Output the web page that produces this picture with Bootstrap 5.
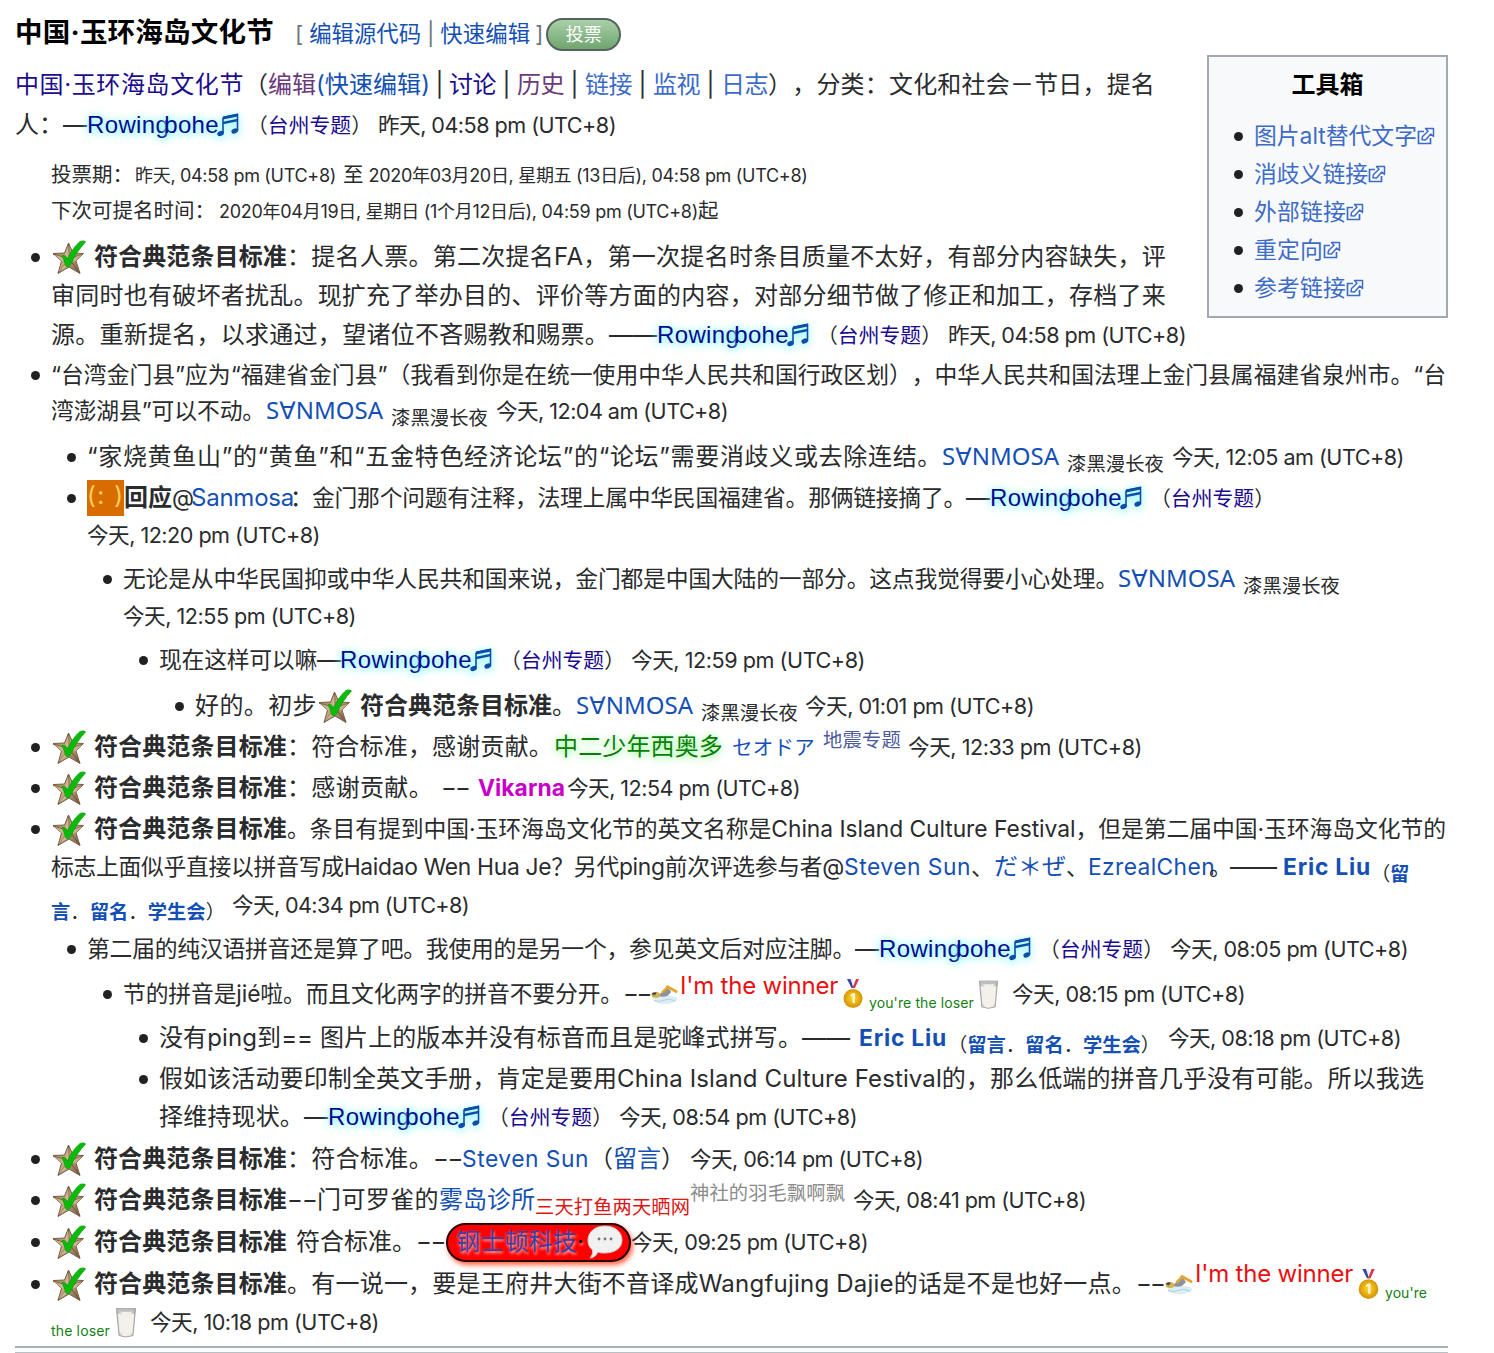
<!DOCTYPE html>
<html lang="zh-CN">
<head>
<meta charset="utf-8">
<title>中国·玉环海岛文化节</title>
<link href="https://cdn.jsdelivr.net/npm/bootstrap@5.3.0/dist/css/bootstrap.min.css" rel="stylesheet">
<script src="https://cdn.jsdelivr.net/npm/bootstrap@5.3.0/dist/js/bootstrap.bundle.min.js"></script>
<style>
html,body{overflow:hidden}
body{background:#fff;color:#2a2b2d;font-family:Inter,"Noto Sans CJK SC",sans-serif;text-spacing-trim:space-all}
.page{width:1448px;height:1353px;padding:16px 0 0 15px;overflow:hidden}
a{color:#1450b4;text-decoration:none}
.ln{display:flex;align-items:baseline;height:36px;white-space:nowrap}
.ln>*{flex-shrink:0}
.ln>span,.ln>a,.ln>b{line-height:1}
.ln::before{content:"\200b";font-size:24px;line-height:36px;width:0}
.ln>svg{align-self:center}
.s14{font-size:14px}.s18{font-size:18px}.s19{font-size:19.3px}.s20{font-size:20.5px}.s21{font-size:20.8px}
.s22{font-size:22.4px}.s23{font-size:22.8px}.s24{font-size:24px}.s27{font-size:27.5px}
.tm{font-size:21.6px}
.t1{margin-top:1px}.t2{margin-top:2px}.t3{margin-top:3px}.t4{margin-top:4px}.t5{margin-top:5px}.t6{margin-top:6px}
.t8{margin-top:8px}.t9{margin-top:9px}.t10{margin-top:10px}.t11{margin-top:11px}.t13{margin-top:13px}.t15{margin-top:15px}
.tree,.tree ul{list-style:none;margin:0;padding-left:36px}
.tree li{display:flex}
.tree li::before,.tools li::before{content:"";flex:none;width:9px;height:9px;border-radius:50%;background:#202122;margin:14px 11px 0 -20px}
.lo,.lo4,.up,.up11{line-height:0;font-size:inherit}
.lo{vertical-align:-6px}.lo4{vertical-align:-6px}
.up{vertical-align:8px}.up11{vertical-align:10px}
.vis{color:#6b3a7c}.nav1{color:#1a0b8f}.soft{color:#3d6bc8}
.bar{width:21px;text-align:center}.bar19{width:19px;text-align:center}
.rw{font-family:"Liberation Sans",sans-serif;color:#0a0a8c;text-shadow:0 0 8px #7df3ff,0 2px 9px #9ff}
.rw span{margin-left:-5px}
.note{width:22px;height:24px;margin-left:-2px;filter:drop-shadow(0 2px 4px #5ef)}
.sm{font-family:"Noto Sans","DejaVu Sans",sans-serif;color:#1450b4}
.vote{width:75px;height:33px;border:2px solid #54645a;border-radius:17px;background:linear-gradient(#a9d0a9,#6fa56f);color:#fff;align-self:center;margin-left:3px;margin-top:1px}
.tools{width:241px;height:263px;border:2px solid #a2a9b1;background:#f8f9fa;margin:3px 0 0 0;padding-top:10px}
.tools ul{list-style:none;margin:15px 0 0;padding-left:45px}
.tools li{display:flex;height:37.9px}
.tools b{color:#000}
.face{width:37px;height:36px;background:#d96c00;color:#ffd060;align-self:center;letter-spacing:1.6px}
.ln>.face{line-height:32px}
.grn{color:#0a7d0a;text-shadow:0 2px 8px #9f9,0 0 6px #cfc}
.pill{width:185px;height:39px;border:2px solid #2a0000;border-radius:20px;background:#f00;box-shadow:2px 3px 5px #f64;align-self:center;padding-left:8px;color:#3b3fa5;text-shadow:1px 2px 3px #fbb}
.win{color:#ea1010}.lose{color:#138013}
.rules{height:7px;border-top:2px solid #a9b1b8;border-bottom:1px solid #b8c0c6}
</style>
</head>
<body>
<svg width="0" height="0" class="position-absolute">
<defs>
<linearGradient id="bronze" x1="0" y1="0" x2="1" y2="1"><stop offset="0" stop-color="#8a6a48"/><stop offset=".5" stop-color="#c3a884"/><stop offset="1" stop-color="#6b4f34"/></linearGradient>
<radialGradient id="gold"><stop offset="0" stop-color="#ffd83a"/><stop offset="1" stop-color="#dda006"/></radialGradient>
<linearGradient id="glass" x1="0" x2="1"><stop offset="0" stop-color="#a9a9a6"/><stop offset=".35" stop-color="#f6f4ee"/><stop offset=".75" stop-color="#eeebe2"/><stop offset="1" stop-color="#9a9a98"/></linearGradient>
<symbol id="star" viewBox="0 0 36 34">
<path d="M17.500 3L22 13L32.500 13.500L25 21L29 33.500L18 27L7 33.500L10.500 21L2 13.500L13.500 13Z" fill="url(#bronze)" stroke="#7a6047" stroke-width="1"/>
<path d="M17.500 4L18 19L32 14M18 19L29 33M18 19L7 33M18 19L2 14" stroke="#6d543c" stroke-width="1" fill="none"/>
<path d="M17.500 5L18 19L14 14ZM32 14L18 19L24.500 21.500ZM7 32L18 19L18 26ZM3 14.500L18 19L11 21.500Z" fill="#dcc7a4" opacity=".6"/>
<path d="M11 15.500C13.500 15 15 16.500 16.500 19C20 11 25 5 29 1.500C31 .5 34.500 1 34.500 2C29 8 23 16 19.500 25C17.500 27.500 15 27 14.500 25C13.500 21 12 18 11 15.500Z" fill="#0bbb0b" stroke="#08a008" stroke-width=".8"/>
</symbol>
<symbol id="note" viewBox="0 0 22 24">
<path d="M6 4.500L20.500 1.500V18M6 4.500V20" fill="none" stroke="#0b4ea8" stroke-width="1.600"/>
<path d="M6 3.500L20.800 .5V3.600L6 6.600ZM6 8.700L20.800 5.700V8.300L6 11.300Z" fill="#0b4ea8"/>
<ellipse cx="3.600" cy="20.500" rx="3.400" ry="2.500" fill="#0b4ea8" transform="rotate(-20 3.600 20.500)"/><ellipse cx="17.700" cy="18" rx="3.400" ry="2.500" fill="#0b4ea8" transform="rotate(-20 17.700 18)"/>
</symbol>
<symbol id="ext" viewBox="0 0 18 18">
<path d="M7 4.500H1.500V16.500H13.500V11" fill="none" stroke="#3d6bc8" stroke-width="1.700"/>
<path d="M8.500 1.500H16.500V9.500L13.800 7L8.500 13L5 12.800L5.500 9.500L11 4.200Z" fill="#f8f9fa" stroke="#3d6bc8" stroke-width="1.500" stroke-linejoin="round"/>
</symbol>
<symbol id="swim" viewBox="0 0 30 22">
<path d="M3 14Q14 11 27 14Q30 18 24 20Q14 23 5 19Z" fill="#dcedf6"/>
<path d="M4 17.500Q9 20 14 17.500T26 18" fill="none" stroke="#a9cfe3" stroke-width="1"/>
<path d="M9 13Q12 8 19 5L22 9L18 13Q13 14.500 9 13Z" fill="#8d929c"/>
<path d="M18 3.500L27 8.500" fill="none" stroke="#e5a52e" stroke-width="3" stroke-linecap="round"/><path d="M18 4L13 9" fill="none" stroke="#e5a52e" stroke-width="2.500" stroke-linecap="round"/>
<ellipse cx="6" cy="12" rx="4.500" ry="3" fill="#d9b24a"/><path d="M1.500 11Q3 8.500 7 9.500L5 12.500Z" fill="#4b4b50"/>
</symbol>
<symbol id="medal" viewBox="0 0 20 30">
<path d="M4 0H7.500L11 9H8.500Z" fill="#3346a5"/><path d="M8 0H10L11 5L10 8Z" fill="#eee"/><path d="M13 0H16L12 9H9.500Z" fill="#d33a4b"/>
<circle cx="10" cy="19.500" r="9.500" fill="#d79a08"/><circle cx="10" cy="19" r="8" fill="url(#gold)"/>
<path d="M7.500 15.500L10 14H12V24H9.500V17L7.500 17.500Z" fill="#fff6c8"/>
</symbol>
<symbol id="milk" viewBox="0 0 22 30">
<path d="M1.500 1H20.500L18 28Q11 31 4 28Z" fill="url(#glass)" stroke="#a5a5a3" stroke-width="1"/>
<path d="M2.800 6Q11 9 19.200 6L17.500 25Q11 27 4.700 25Z" fill="#f4f1ea"/><ellipse cx="11" cy="2.500" rx="9" ry="1.800" fill="#bdbdbb"/>
</symbol>
<symbol id="talk" viewBox="0 0 36 34">
<path d="M18 1C28 1 35 7 35 15S28 28 18 28C15 28 13 28 11 27C9 31 6 33 3 33C5 31 6 28 5.500 25C2 22 1 19 1 15C1 7 8 1 18 1Z" fill="#f1f1f1" stroke="#c9c9c9"/>
<circle cx="12" cy="14" r="1.400" fill="#777"/><circle cx="18" cy="14" r="1.400" fill="#777"/><circle cx="24" cy="14" r="1.400" fill="#777"/>
</symbol>
</defs>
</svg>
<main class="page">
<header class="ln text-black">
<b class="s27" data-w="259">中国·玉环海岛文化节</b>
<span class="s22 text-secondary" data-g="21">[</span>
<a class="s22" href="#" data-w="112" data-g="6">编辑源代码</a>
<span class="s22 bar19 text-secondary">|</span>
<a class="s22" href="#" data-w="90">快速编辑</a>
<span class="s22 text-secondary" data-g="5">]</span>
<span class="vote s18 d-flex align-items-center justify-content-center">投票</span>
</header>
<aside class="tools float-end">
<div class="ln justify-content-center"><b class="s24">工具箱</b></div>
<ul>
<li><div class="ln"><a class="soft s23" href="#" data-w="163">图片alt替代文字</a><svg width="18" height="18"><use href="#ext"/></svg></div></li>
<li><div class="ln"><a class="soft s23" href="#" data-w="114">消歧义链接</a><svg width="18" height="18"><use href="#ext"/></svg></div></li>
<li><div class="ln"><a class="soft s23" href="#" data-w="92">外部链接</a><svg width="18" height="18"><use href="#ext"/></svg></div></li>
<li><div class="ln"><a class="soft s23" href="#" data-w="69">重定向</a><svg width="18" height="18"><use href="#ext"/></svg></div></li>
<li><div class="ln"><a class="soft s23" href="#" data-w="92">参考链接</a><svg width="18" height="18"><use href="#ext"/></svg></div></li>
</ul>
</aside>
<div class="ln t15">
<a class="nav1 s24" href="#" data-w="229">中国·玉环海岛文化节</a>
<span class="s24" data-w="24">（</span>
<a class="vis s24" href="#" data-w="48">编辑</a>
<a class="s24" href="#" data-w="114">(快速编辑)</a>
<span class="s24 bar19">|</span><a class="nav1 s24" href="#" data-w="47">讨论</a>
<span class="s24 bar">|</span><a class="vis s24" href="#" data-w="47">历史</a>
<span class="s24 bar">|</span><a class="soft s24" href="#" data-w="47">链接</a>
<span class="s24 bar">|</span><a class="soft s24" href="#" data-w="47">监视</a>
<span class="s24 bar">|</span><a class="soft s24" href="#" data-w="47">日志</a>
<span class="s24" data-w="387">），分类：文化和社会－节日，提名</span>
</div>
<div class="ln t4">
<span class="s24" data-w="48">人：</span><span class="s24" data-w="24">—</span>
<a class="rw s24" href="#" data-w="132">Rowing<span>bohe</span></a><svg class="note"><use href="#note"/></svg>
<span class="s21" data-w="125" data-g="8">（<a class="nav1" href="#">台州专题</a>）</span>
<span class="tm" data-w="238" data-g="6">昨天, 04:58 pm (UTC+8)</span>
</div>
<div class="t13" style="padding-left:36px">
<div class="ln"><span class="s20" data-w="82">投票期：</span><span class="s18" data-w="201" data-g="2">昨天, 04:58 pm (UTC+8)</span><span class="s20" data-g="7">至</span><span class="s18" data-w="439" data-g="5">2020年03月20日, 星期五 (13日后), 04:58 pm (UTC+8)</span></div>
<div class="ln"><span class="s20" data-w="164">下次可提名时间：</span><span class="s18" data-w="479" data-g="4">2020年04月19日, 星期日 (1个月12日后), 04:59 pm (UTC+8)</span><span class="s20">起</span></div>
</div>
<ul class="tree">
<li class="t11"><div>
<div class="ln"><svg width="36" height="34"><use href="#star"/></svg><b class="s24" data-w="193" data-g="7">符合典范条目标准</b><span class="s24" data-w="879">：提名人票。第二次提名FA，第一次提名时条目质量不太好，有部分内容缺失，评</span></div>
<div class="ln t3"><span class="s24" data-w="1115">审同时也有破坏者扰乱。现扩充了举办目的、评价等方面的内容，对部分细节做了修正和加工，存档了来</span></div>
<div class="ln t3"><span class="s24" data-w="558">源。重新提名，以求通过，望诸位不吝赐教和赐票。</span><span class="s24" data-w="48">——</span><a class="rw s24" href="#" data-w="132">Rowing<span>bohe</span></a><svg class="note"><use href="#note"/></svg><span class="s21" data-w="125" data-g="8">（<a class="nav1" href="#">台州专题</a>）</span><span class="tm" data-w="238" data-g="6">昨天, 04:58 pm (UTC+8)</span></div>
</div></li>
<li class="t4"><div>
<div class="ln"><span class="s23" data-w="1395">“台湾金门县”应为“福建省金门县”（我看到你是在统一使用中华人民共和国行政区划），中华人民共和国法理上金门县属福建省泉州市。“台</span></div>
<div class="ln"><span class="s23" data-w="214">湾澎湖县”可以不动。</span><a class="sm s24" href="#" data-w="117" data-g="1">S∀NMOSA</a><span class="s19" data-w="97" data-g="8"><span class="lo">漆黑漫长夜</span></span><span class="tm" data-w="232" data-g="8">今天, 12:04 am (UTC+8)</span></div>
<ul>
<li class="t10"><div>
<div class="ln"><span class="s24" data-w="855">“家烧黄鱼山”的“黄鱼”和“五金特色经济论坛”的“论坛”需要消歧义或去除连结。</span><a class="sm s24" href="#" data-w="117">S∀NMOSA</a><span class="s19" data-w="97" data-g="8"><span class="lo">漆黑漫长夜</span></span><span class="tm" data-w="232" data-g="8">今天, 12:05 am (UTC+8)</span></div>
</div></li>
<li class="t5"><div>
<div class="ln"><span class="face s24" data-w="37">(:&nbsp;)</span><b class="s24" data-w="48">回应</b><span class="s23" data-w="19">@</span><a class="s24" href="#" data-w="103">Sanmosa</a><span class="s23" data-w="22" data-g="-4">：</span><span class="s23" data-w="654">金门那个问题有注释，法理上属中华民国福建省。那俩链接摘了。</span><span class="s24" data-w="24">—</span><a class="rw s24" href="#" data-w="132">Rowing<span>bohe</span></a><svg class="note"><use href="#note"/></svg><span class="s21" data-w="125" data-g="8">（<a class="nav1" href="#">台州专题</a>）</span></div>
<div class="ln t1"><span class="tm" data-w="233">今天, 12:20 pm (UTC+8)</span></div>
<ul>
<li class="t8"><div>
<div class="ln"><span class="s23" data-w="995">无论是从中华民国抑或中华人民共和国来说，金门都是中国大陆的一部分。这点我觉得要小心处理。</span><a class="sm s24" href="#" data-w="117">S∀NMOSA</a><span class="s19" data-w="97" data-g="8"><span class="lo">漆黑漫长夜</span></span></div>
<div class="ln t1"><span class="tm" data-w="233">今天, 12:55 pm (UTC+8)</span></div>
<ul>
<li class="t8"><div>
<div class="ln"><span class="s23" data-w="158">现在这样可以嘛</span><span class="s24" data-w="23">—</span><a class="rw s24" href="#" data-w="132">Rowing<span>bohe</span></a><svg class="note"><use href="#note"/></svg><span class="s21" data-w="125" data-g="8">（<a class="nav1" href="#">台州专题</a>）</span><span class="tm" data-w="234" data-g="6">今天, 12:59 pm (UTC+8)</span></div>
<ul>
<li class="t10"><div>
<div class="ln"><span class="s24" data-w="122">好的。初步</span><svg width="36" height="34"><use href="#star"/></svg><b class="s24" data-w="192" data-g="7">符合典范条目标准</b><span class="s24" data-w="24">。</span><a class="sm s24" href="#" data-w="117">S∀NMOSA</a><span class="s19" data-w="97" data-g="8"><span class="lo">漆黑漫长夜</span></span><span class="tm" data-w="229" data-g="7">今天, 01:01 pm (UTC+8)</span></div>
</div></li>
</ul>
</div></li>
</ul>
</div></li>
</ul>
</div></li>
</ul>
</div></li>
<li class="t5"><div>
<div class="ln"><svg width="36" height="34"><use href="#star"/></svg><b class="s24" data-w="193" data-g="7">符合典范条目标准</b><span class="s24" data-w="266">：符合标准，感谢贡献。</span><a class="grn s24" href="#" data-w="169" data-g="1">中二少年西奥多</a><a class="s20" href="#" data-w="83" data-g="9">セオドア</a><span class="s19" data-w="78" data-g="8"><a class="up" href="#" style="color:#4d5b9e">地震专题</a></span><span class="tm" data-w="234" data-g="7">今天, 12:33 pm (UTC+8)</span></div>
</div></li>
<li class="t5"><div>
<div class="ln"><svg width="36" height="34"><use href="#star"/></svg><b class="s24" data-w="193" data-g="7">符合典范条目标准</b><span class="s24" data-w="146">：感谢贡献。</span><span class="s24" data-w="28" data-g="8">−−</span><b class="s23" data-w="87" data-g="9" style="color:#c800c8">Vikarna</b><span class="tm" data-w="233" data-g="2">今天, 12:54 pm (UTC+8)</span></div>
</div></li>
<li class="t5"><div>
<div class="ln"><svg width="36" height="34"><use href="#star"/></svg><b class="s24" data-w="193" data-g="7">符合典范条目标准</b><span class="s23" data-w="1159">。条目有提到中国·玉环海岛文化节的英文名称是China Island Culture Festival，但是第二届中国·玉环海岛文化节的</span></div>
<div class="ln t2"><span class="s23" data-w="793">标志上面似乎直接以拼音写成Haidao Wen Hua Je？另代ping前次评选参与者@</span><a class="s23" href="#" data-w="127">Steven Sun</a><span class="s23" data-w="23">、</span><a class="s24" href="#" data-w="72">だ＊ぜ</a><span class="s23" data-w="22">、</span><a class="s23" href="#" data-w="127">EzrealChen</a><span class="s23" data-w="23" data-g="-6">。</span><span class="s24" data-w="46" data-g="-2">——</span><a class="s23 fw-bold" href="#" data-w="88" data-g="7">Eric Liu</a><span class="s19" data-w="38"><span class="lo">（<a class="fw-bold" href="#">留</a></span></span></div>
<div class="ln t2"><span class="s19" data-w="174"><span class="lo"><a class="fw-bold" href="#">言</a>．<a class="fw-bold" href="#">留名</a>．<a class="fw-bold" href="#">学生会</a>）</span></span><span class="tm" data-w="237" data-g="7">今天, 04:34 pm (UTC+8)</span></div>
<ul>
<li class="t8"><div>
<div class="ln"><span class="s23" data-w="768">第二届的纯汉语拼音还是算了吧。我使用的是另一个，参见英文后对应注脚。</span><span class="s24" data-w="24">—</span><a class="rw s24" href="#" data-w="132">Rowing<span>bohe</span></a><svg class="note"><use href="#note"/></svg><span class="s21" data-w="125" data-g="8">（<a class="nav1" href="#">台州专题</a>）</span><span class="tm" data-w="238" data-g="6">今天, 08:05 pm (UTC+8)</span></div>
<ul>
<li class="t9"><div>
<div class="ln"><span class="s23" data-w="500">节的拼音是jié啦。而且文化两字的拼音不要分开。</span><span class="s24" data-w="27">−−</span><svg width="29" height="22"><use href="#swim"/></svg><span class="s24 win" data-w="158" data-g="1"><span class="up">I'm the winner</span></span><svg width="20" height="30" data-g="5"><use href="#medal"/></svg><span class="s14 lose" data-w="105" data-g="6"><span class="lo4">you're the loser</span></span><svg width="21" height="29" data-g="4"><use href="#milk"/></svg><span class="tm" data-w="233" data-g="13">今天, 08:15 pm (UTC+8)</span></div>
<ul>
<li class="t8"><div>
<div class="ln"><span class="s24" data-w="643">没有ping到== 图片上的版本并没有标音而且是驼峰式拼写。</span><span class="s24" data-w="48">——</span><a class="s23 fw-bold" href="#" data-w="88" data-g="9">Eric Liu</a><span class="s19" data-w="212" data-g="1"><span class="lo">（<a class="fw-bold" href="#">留言</a>．<a class="fw-bold" href="#">留名</a>．<a class="fw-bold" href="#">学生会</a>）</span></span><span class="tm" data-w="233" data-g="8">今天, 08:18 pm (UTC+8)</span></div>
</div></li>
<li class="t5"><div>
<div class="ln"><span class="s24" data-w="1265">假如该活动要印制全英文手册，肯定是要用China Island Culture Festival的，那么低端的拼音几乎没有可能。所以我选</span></div>
<div class="ln t2"><span class="s24" data-w="145">择维持现状。</span><span class="s24" data-w="24">—</span><a class="rw s24" href="#" data-w="132">Rowing<span>bohe</span></a><svg class="note"><use href="#note"/></svg><span class="s21" data-w="125" data-g="8">（<a class="nav1" href="#">台州专题</a>）</span><span class="tm" data-w="238" data-g="6">今天, 08:54 pm (UTC+8)</span></div>
</div></li>
</ul>
</div></li>
</ul>
</div></li>
</ul>
</div></li>
<li class="t6"><div>
<div class="ln"><svg width="36" height="34"><use href="#star"/></svg><b class="s24" data-w="193" data-g="7">符合典范条目标准</b><span class="s24" data-w="146">：符合标准。</span><span class="s24" data-w="29">−−</span><a class="s23" href="#" data-w="127">Steven Sun</a><span class="s24" data-w="96">（<a href="#">留言</a>）</span><span class="tm" data-w="233" data-g="5">今天, 06:14 pm (UTC+8)</span></div>
</div></li>
<li class="t5"><div>
<div class="ln"><svg width="36" height="34"><use href="#star"/></svg><b class="s24" data-w="193" data-g="7">符合典范条目标准</b><span class="s24" data-w="30">−−</span><span class="s24" data-w="122">门可罗雀的</span><a class="s24" href="#" data-w="96">雾岛诊所</a><span class="s19" data-w="155" style="color:#e01414"><span class="lo">三天打鱼两天晒网</span></span><span class="s19" data-w="155" style="color:#8b8b8b"><span class="up">神社的羽毛飘啊飘</span></span><span class="tm" data-w="233" data-g="8">今天, 08:41 pm (UTC+8)</span></div>
</div></li>
<li class="t6"><div>
<div class="ln"><svg width="36" height="34"><use href="#star"/></svg><b class="s24" data-w="193" data-g="7">符合典范条目标准</b><span class="s24" data-w="120" data-g="9">符合标准。</span><span class="s24" data-w="29">−−</span><span class="pill s24 d-flex align-items-center" data-g="1"><span data-w="121">钢士顿科技</span><span class="text-black" data-w="9">·</span><svg width="36" height="34" data-g="1"><use href="#talk"/></svg></span><span class="tm" data-w="237">今天, 09:25 pm (UTC+8)</span></div>
</div></li>
<li class="t6"><div>
<div class="ln"><svg width="36" height="34"><use href="#star"/></svg><b class="s24" data-w="193" data-g="7">符合典范条目标准</b><span class="s24" data-w="849">。有一说一，要是王府井大街不音译成Wangfujing Dajie的话是不是也好一点。</span><span class="s24" data-w="28">−−</span><svg width="30" height="22"><use href="#swim"/></svg><span class="s24 win" data-w="158" data-g="1"><span class="up11">I'm the winner</span></span><svg width="21" height="31" data-g="5"><use href="#medal"/></svg><span class="s14 lose" data-w="42" data-g="6"><span class="lo4">you're</span></span></div>
<div class="ln t2"><span class="s14 lose" data-w="59"><span class="lo4">the loser</span></span><svg width="22" height="31" data-g="5"><use href="#milk"/></svg><span class="tm" data-w="229" data-g="13">今天, 10:18 pm (UTC+8)</span></div>
</div></li>
</ul>
<div class="rules t6"></div>
</main>
<script>
// Track each run of text out to its own measure
document.querySelectorAll('[data-w]').forEach(function (el) {
  var target = +el.dataset.w, n = el.textContent.length;
  if (el.classList.contains('face')) return;
  var natural = el.getBoundingClientRect().width;
  el.style.letterSpacing = ((target - natural) / n).toFixed(3) + 'px';
  el.style.width = target + 'px';
});
document.querySelectorAll('[data-g]').forEach(function (el) {
  el.style.marginLeft = el.dataset.g + 'px';
});
</script>
</body>
</html>
